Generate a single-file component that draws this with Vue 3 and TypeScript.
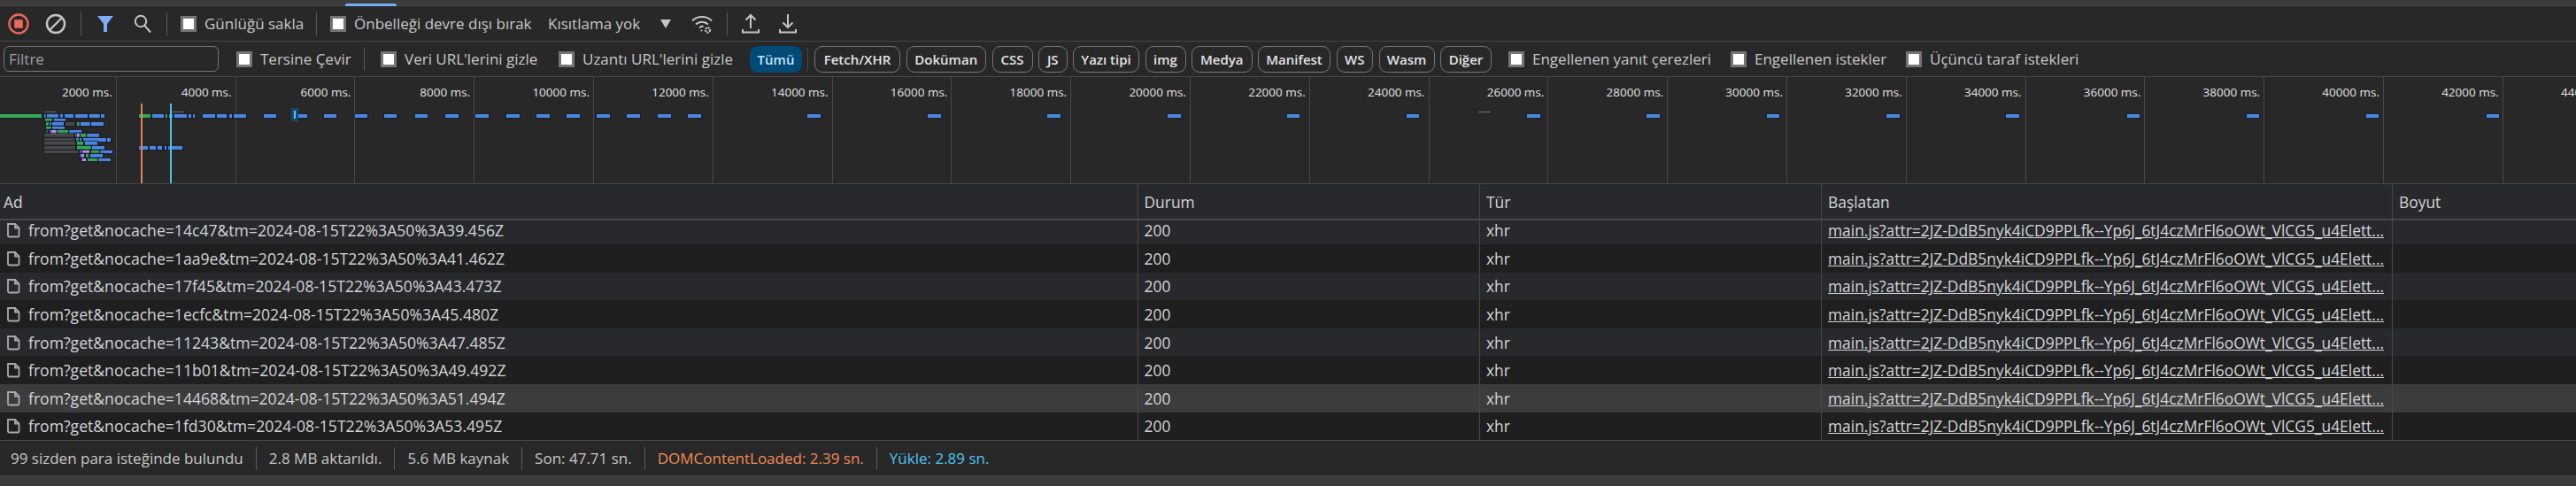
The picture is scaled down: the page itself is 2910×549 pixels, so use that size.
<script setup lang="ts">
interface Bar { x: number; y: number; w: number; c: string }

const colours: Record<string, string> = {
  g: '#34a853', b: '#4a86e0', k: '#474747', p: '#c58af0'
}

const rawBars: [number, string, [number, number][]][] = [
  [126.7, 'k', [[50, 14], [193, 15], [1670, 14]]],
  [131, 'g', [[0, 47], [157, 13], [187, 2]]],
  [131, 'b', [[50, 1.5], [53, 13], [68, 3], [73, 10], [85, 14], [101, 12], [114, 4], [172, 13], [191, 4], [197, 14], [213, 3], [218, 2], [229, 14], [245, 11], [259, 3], [264, 14], [298, 14], [337, 10], [366, 14], [401, 14], [434, 14], [469, 14], [503, 15], [537, 15], [572, 15], [606, 15], [640, 15], [674, 15], [708, 15], [743, 15], [777, 15], [912, 15], [1048, 15], [1183, 15], [1319, 15], [1454, 14], [1589, 14], [1725, 15], [1860, 15], [1996, 14], [2131, 15], [2266, 15], [2403, 14], [2538, 14], [2673, 14], [2809, 14]]],
  [135.7, 'g', [[51, 8]]], [135.7, 'b', [[61, 13]]],
  [140, 'g', [[52, 3], [87, 3]]], [140, 'b', [[56, 1.5], [59, 13], [91, 11], [103, 14]]], [140, 'k', [[74, 10]]],
  [144.7, 'g', [[52, 6]]], [144.7, 'b', [[59, 14]]],
  [149, 'k', [[52, 2]]], [149, 'b', [[56, 1.5], [78, 14]]], [149, 'p', [[58, 6]]], [149, 'g', [[65, 12]]],
  [153.3, 'k', [[50, 33]]], [153.3, 'b', [[85, 1.5], [98, 14]]], [153.3, 'p', [[87, 3]]], [153.3, 'g', [[91, 6]]],
  [158, 'k', [[50, 34]]], [158, 'g', [[86, 3]]], [158, 'b', [[90, 1.5], [94, 26], [121, 4]]],
  [162.3, 'k', [[50, 35]]], [162.3, 'g', [[87, 7]]], [162.3, 'b', [[96, 14]]],
  [167, 'k', [[50, 35]]], [167, 'g', [[87, 16]]], [167, 'b', [[104, 14], [157, 2], [160, 7], [169, 7], [178, 5], [186, 1.5], [190, 2], [193, 13]]],
  [171.7, 'k', [[50, 38]]], [171.7, 'b', [[90, 1.5], [113, 14]]], [171.7, 'p', [[93, 8]]], [171.7, 'g', [[103, 9]]],
  [176, 'b', [[90, 1.5], [102, 14]]], [176, 'p', [[92, 3]]], [176, 'g', [[97, 3]]],
  [180.7, 'b', [[92, 1.5], [111, 14]]], [180.7, 'p', [[93, 4]]], [180.7, 'g', [[99, 11]]]
]

const bars: Bar[] = rawBars.flatMap(([y, key, spans]) =>
  spans.map(([x, w]) => ({ x, y: y - 87 - 2, w, c: colours[key] }))
)

const ticks = Array.from({ length: 22 }, (_, i) => `${(i + 1) * 2000} ms.`)

const rows = [
  '14c47&tm=2024-08-15T22%3A50%3A39.456Z',
  '1aa9e&tm=2024-08-15T22%3A50%3A41.462Z',
  '17f45&tm=2024-08-15T22%3A50%3A43.473Z',
  '1ecfc&tm=2024-08-15T22%3A50%3A45.480Z',
  '11243&tm=2024-08-15T22%3A50%3A47.485Z',
  '11b01&tm=2024-08-15T22%3A50%3A49.492Z',
  '14468&tm=2024-08-15T22%3A50%3A51.494Z',
  '1fd30&tm=2024-08-15T22%3A50%3A53.495Z'
]

const chips = [
  { t: 'Fetch/XHR', w: 97 }, { t: 'Doküman', w: 90.5 }, { t: 'CSS', w: 46 }, { t: 'JS', w: 32.5 },
  { t: 'Yazı tipi', w: 75 }, { t: 'img', w: 46 }, { t: 'Medya', w: 68.5 }, { t: 'Manifest', w: 82 },
  { t: 'WS', w: 41.5 }, { t: 'Wasm', w: 63 }, { t: 'Diğer', w: 58 }
]

const initiator = 'main.js?attr=2JZ-DdB5nyk4iCD9PPLfk--Yp6J_6tJ4czMrFl6oOWt_VlCG5_u4Elett...'
</script>

<template>
  <div class="devtools">
    <div class="topstrip"><span class="tabmark"></span></div>

    <div class="toolbar">
      <button class="ib">
        <svg width="26" height="26" viewBox="0 0 26 26"><circle cx="13" cy="13" r="10.5" fill="none" stroke="#ee675c" stroke-width="2.4"/><rect x="8.2" y="8.2" width="9.6" height="9.6" rx="0.8" fill="#ee675c"/></svg>
      </button>
      <button class="ib">
        <svg width="26" height="26" viewBox="0 0 26 26" fill="none" stroke="#c4c7c5" stroke-width="2.4"><circle cx="13" cy="13" r="10"/><path d="M6 20L20 6"/></svg>
      </button>
      <i class="sep ml7"></i>
      <button class="ib ml6">
        <svg width="22" height="22" viewBox="0 0 22 22"><path d="M2 2h18l-7 9v9h-4v-9z" fill="#7cacf8"/></svg>
      </button>
      <button class="ib">
        <svg width="24" height="24" viewBox="0 0 24 24" fill="none" stroke="#c4c7c5" stroke-width="2"><circle cx="10" cy="9" r="6.2"/><path d="M14.2 13.6L21 21.5"/></svg>
      </button>
      <i class="sep ml6"></i>
      <label class="check ml15 w139"><i class="box"></i>Günlüğü sakla</label>
      <i class="sep ml14"></i>
      <label class="check ml15 w230"><i class="box"></i>Önbelleği devre dışı bırak</label>
      <span class="throttle">Kısıtlama yok</span>
      <svg class="arrow" width="14" height="10" viewBox="0 0 14 10"><path d="M1 0h12L7 10z" fill="#c4c7c5"/></svg>
      <svg class="wifi" width="28" height="26" viewBox="0 0 28 26" fill="none" stroke="#c4c7c5" stroke-width="2"><path d="M3 9.5C9 3.5 19 3.5 25 9.5"/><path d="M7 13.5C11 9.8 17 9.8 21 13.5"/><path d="M11 17.2C12.6 15.8 14.4 15.6 15.5 16"/><circle cx="13.5" cy="20.6" r="1" fill="#c4c7c5" stroke="none"/><circle cx="20.5" cy="20" r="2.6" stroke-width="2.2" stroke-dasharray="2 1"/></svg>
      <i class="sep ml14"></i>
      <svg class="updown ml12" width="28" height="26" viewBox="0 0 28 26" fill="none" stroke="#c4c7c5" stroke-width="2"><path d="M14 18V3M8.5 8.5L14 3l5.500 5.500M5 19v3.500h18V19"/></svg>
      <svg class="updown ml14" width="28" height="26" viewBox="0 0 28 26" fill="none" stroke="#c4c7c5" stroke-width="2"><path d="M14 2v15M8.500 11.500L14 17l5.500-5.500M5 19v3.500h18V19"/></svg>
    </div>

    <div class="filterbar">
      <div class="filterinput">Filtre</div>
      <label class="check ml20 w126"><i class="box"></i>Tersine Çevir</label>
      <i class="sep ml18"></i>
      <label class="check ml18 w178"><i class="box"></i>Veri URL'lerini gizle</label>
      <label class="check ml23 w199"><i class="box"></i>Uzantı URL'lerini gizle</label>
      <span class="all">Tümü</span>
      <i class="sep short ml6"></i>
      <div class="chips">
        <span v-for="c in chips" :key="c.t" class="chip" :style="{ width: c.w + 'px' }">{{ c.t }}</span>
      </div>
      <label class="check ml19 w228"><i class="box"></i>Engellenen yanıt çerezleri</label>
      <label class="check ml23 w175"><i class="box"></i>Engellenen istekler</label>
      <label class="check ml23 w193"><i class="box"></i>Üçüncü taraf istekleri</label>
    </div>

    <div class="overview">
      <div class="ticks">
        <div v-for="t in ticks" :key="t" class="tick">{{ t }}</div>
      </div>
      <span v-for="(b, i) in bars" :key="i" class="bar" :style="{ left: b.x + 'px', top: b.y + 'px', width: b.w + 'px', background: b.c }"></span>
      <span class="selected"><i></i></span>
      <span class="marker orange"></span>
      <span class="marker cyan"></span>
    </div>

    <div class="grid head">
      <div class="cell first">Ad</div>
      <div class="cell">Durum</div>
      <div class="cell">Tür</div>
      <div class="cell">Başlatan</div>
      <div class="cell">Boyut</div>
    </div>

    <div class="body">
      <div class="inner">
        <div v-for="(r, i) in rows" :key="r" class="grid row" :class="{ alt: i % 2 === 1, hover: i === 6 }">
          <div class="cell first">
            <svg class="file" width="18" height="18" viewBox="0 0 18 18" fill="none" stroke="#a8abad" stroke-width="1.800"><path d="M3 2h8l4.500 4.500V15a1.500 1.500 0 0 1-1.500 1.500H4.500A1.500 1.500 0 0 1 3 15z"/><path d="M11 2v4.500h4.500"/></svg>
            <span class="name">from?get&amp;nocache={{ r }}</span>
          </div>
          <div class="cell">200</div>
          <div class="cell">xhr</div>
          <div class="cell"><a>{{ initiator }}</a></div>
          <div class="cell"></div>
        </div>
      </div>
    </div>

    <div class="status">
      <span>99 sizden para isteğinde bulundu</span>
      <span>2.8 MB aktarıldı.</span>
      <span>5.6 MB kaynak</span>
      <span>Son: 47.71 sn.</span>
      <span class="dom">DOMContentLoaded: 2.39 sn.</span>
      <span class="load">Yükle: 2.89 sn.</span>
    </div>
    <div class="bottomstrip"></div>
  </div>
</template>

<style>
html, body { margin: 0; background: #3c3c3c; }
</style>

<style scoped>
.devtools {
  width: 2910px;
  height: 549px;
  overflow: hidden;
  background: #282828;
  color: #c7c7c7;
  font-family: "Open Sans", "Noto Sans", sans-serif;
  font-size: 17px;
  display: flex;
  flex-direction: column;
}
.topstrip { height: 6px; background: #3c3c3c; border-bottom: 1px solid #474747; position: relative; flex: none; }
.tabmark { position: absolute; left: 390px; width: 58px; top: 4px; height: 3px; background: #7cacf8; border-radius: 2px 2px 0 0; }
.toolbar, .filterbar { display: flex; align-items: center; flex: none; white-space: nowrap; border-bottom: 1px solid #474747; box-sizing: border-box; }
.toolbar { height: 40px; }
.filterbar { height: 40px; }
.ib { width: 42px; height: 36px; padding: 0; border: 0; background: none; display: flex; align-items: center; justify-content: center; flex: none; }
.sep { display: block; width: 1px; height: 26px; background: #5a5a5a; flex: none; }
.sep.short { height: 26px; background: #474747; }
.check { display: flex; align-items: center; gap: 9px; flex: none; color: #c7c7c7; }
.box { display: block; width: 18px; height: 18px; box-sizing: border-box; border: 3px solid #757575; background: #fff; flex: none; }
.ml6 { margin-left: 6px; } .ml7 { margin-left: 7px; } .ml12 { margin-left: 12px; } .ml14 { margin-left: 14px; }
.ml15 { margin-left: 15px; } .ml18 { margin-left: 18px; } .ml19 { margin-left: 19px; } .ml20 { margin-left: 20px; } .ml23 { margin-left: 23px; }
.w139 { width: 139px; } .w230 { width: 230px; } .w126 { width: 126px; } .w178 { width: 178px; } .w199 { width: 199px; }
.w228 { width: 228px; } .w175 { width: 175px; } .w193 { width: 193px; }
.throttle { margin-left: 16px; width: 104px; flex: none; }
.arrow { margin-left: 22px; flex: none; }
.wifi { margin-left: 20px; flex: none; }
.updown { flex: none; }
.filterinput { margin-left: 4px; width: 243px; height: 29px; box-sizing: border-box; border: 1px solid #757575; border-radius: 6px; padding-left: 5px; line-height: 27px; color: #9aa0a6; flex: none; }
.all { margin-left: 17px; width: 59px; height: 30px; line-height: 30px; text-align: center; border-radius: 9px; background: #004a77; color: #c2e7ff; font-weight: 600; font-size: 15px; flex: none; }
.chips { margin-left: 7px; display: flex; gap: 6.5px; flex: none; }
.chip { height: 30px; line-height: 28px; box-sizing: border-box; border: 1px solid #757575; border-radius: 9px; text-align: center; color: #e3e3e3; font-weight: 600; font-size: 15px; flex: none; white-space: nowrap; }
.overview { position: relative; height: 121px; flex: none; overflow: hidden; border-bottom: 1px solid #474747; box-sizing: border-box; }
.ticks { display: flex; height: 100%; margin-left: -3px; }
.tick { width: 134.8px; flex: none; box-sizing: border-box; border-right: 1px solid #474747; text-align: right; padding: 7px 4px 0 0; font-size: 13.5px; color: #e3e3e3; white-space: nowrap; line-height: 20px; }
.bar { position: absolute; height: 3.500px; box-shadow: 0 0 0 1.500px rgba(24, 30, 40, 0.55); }
.selected { position: absolute; left: 329px; top: 35px; width: 8px; height: 15px; background: #0f4a75; display: flex; justify-content: center; align-items: center; }
.selected i { display: block; width: 2px; height: 9px; background: #7fb4ea; }
.marker { position: absolute; top: 30px; bottom: 0; width: 2px; }
.orange { left: 159px; background: #e2855a; }
.cyan { left: 192px; background: #4dc3ec; }
.grid { display: grid; grid-template-columns: 1284.5px 386.500px 386px 645px 1fr; font-size: 17.4px; }
.head { height: 41px; flex: none; background: #28292d; border-bottom: 2px solid #474747; box-sizing: border-box; align-items: stretch; }
.cell { box-sizing: border-box; padding-left: 7px; display: flex; align-items: center; border-left: 1px solid #474747; white-space: nowrap; overflow: hidden; color: #d2d4d6; }
.cell.first { padding-left: 4px; border-left: 0; }
.name { font-size: 17.6px; }
.body { height: 248px; overflow: hidden; flex: none; }
.inner { margin-top: -4.6px; }
.row { height: 31.6px; background: #28292d; }
.row.alt { background: #1f1f1f; }
.row.hover { background: #3c3c3c; }
.file { flex: none; margin: 0 8px 0 2px; }
a { text-decoration: underline; color: #d2d4d6; }
.status { height: 41px; flex: none; box-sizing: border-box; border-top: 1px solid #474747; border-bottom: 1px solid #474747; display: flex; align-items: center; white-space: nowrap; background: #282828; }
.status span { padding: 0 14px; border-left: 1px solid #5a5a5a; line-height: 26px; }
.status span:first-child { border-left: 0; padding-left: 12px; }
.dom { color: #f28b54; }
.load { color: #4cc6f0; }
.bottomstrip { flex: 1; background: #3c3c3c; }
</style>
